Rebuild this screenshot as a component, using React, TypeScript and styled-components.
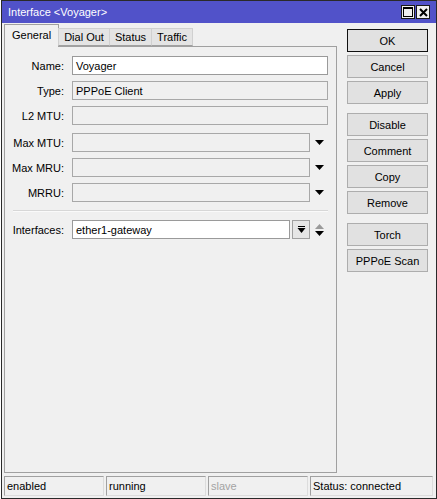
import React from 'react';
import styled, { createGlobalStyle } from 'styled-components';

const GlobalStyle = createGlobalStyle`
  html, body {
    margin: 0;
    padding: 0;
    background: #ffffff;
  }
  body {
    font-family: 'Liberation Sans', Arial, sans-serif;
    font-size: 11px;
    color: #000;
  }
  * {
    box-sizing: border-box;
  }
`;

const Window = styled.div`
  width: 436px;
  height: 499px;
  margin-left: 1px;
  border: 1px solid #2a2a2a;
  background: #f0f0f0;
  display: flex;
  flex-direction: column;
`;

const TitleBar = styled.div`
  height: 22px;
  background: #5152c9;
  color: #ffffff;
  font-size: 11px;
  display: flex;
  align-items: center;
  padding: 0 6px 0 6px;
`;

const Title = styled.span`
  flex: 1;
`;

const TitleButton = styled.div`
  width: 14px;
  height: 14px;
  border: 1px solid #1a1a1a;
  background: #f0f0f0;
  display: flex;
  align-items: center;
  justify-content: center;
  margin-left: 1px;
`;

const Body = styled.div`
  flex: 1;
  display: flex;
  padding: 1px 6px 0 2px;
  min-height: 0;
`;

const LeftColumn = styled.div`
  width: 333px;
  display: flex;
  flex-direction: column;
`;

const TabStrip = styled.div`
  display: flex;
  align-items: flex-end;
  height: 22px;
  position: relative;
  z-index: 1;
`;

const Tab = styled.div<{ $active?: boolean }>`
  height: ${({ $active }) => ($active ? '23px' : '18px')};
  padding: ${({ $active }) => ($active ? '0 7px 3px' : '0 5px')};
  display: flex;
  align-items: center;
  background: ${({ $active }) => ($active ? '#f0f0f0' : '#e4e4e4')};
  border: 1px solid ${({ $active }) => ($active ? '#a0a0a0' : '#d0d0d0')};
  border-bottom: ${({ $active }) => ($active ? 'none' : '1px solid #a0a0a0')};
  margin-bottom: ${({ $active }) => ($active ? '-1px' : '0')};
  margin-left: ${({ $active }) => ($active ? '0' : '-1px')};
  &:first-child {
    margin-left: 0;
  }
`;

const Panel = styled.div`
  flex: 1;
  border: 1px solid #a0a0a0;
  padding: 9px 8px 0 0;
`;

const Row = styled.div<{ $gap?: number }>`
  display: flex;
  align-items: center;
  height: 19px;
  margin-top: ${({ $gap }) => $gap ?? 6}px;
  &:first-child {
    margin-top: 0;
  }
`;

const Label = styled.label`
  width: 59px;
  margin-right: 8px;
  text-align: right;
  white-space: nowrap;
`;

const Field = styled.div<{ $editable?: boolean }>`
  flex: 1;
  height: 19px;
  border: 1px solid ${({ $editable }) => ($editable ? '#9a9a9a' : '#a8a8a8')};
  background: ${({ $editable }) => ($editable ? '#ffffff' : '#f0f0f0')};
  padding: 0 3px;
  display: flex;
  align-items: center;
  white-space: nowrap;
  overflow: hidden;
`;

const ArrowSlot = styled.div`
  width: 18px;
  height: 19px;
  display: flex;
  flex-direction: column;
  align-items: center;
  justify-content: center;
  gap: 2px;
`;

const DropButton = styled.div`
  width: 18px;
  height: 19px;
  margin-left: 2px;
  border: 1px solid #a0a0a0;
  background: #e6e6e6;
  display: flex;
  align-items: center;
  justify-content: center;
`;

const Separator = styled.div`
  margin: 8px 0 8px 8px;
  border-top: 1px solid #d7d7d7;
  border-bottom: 1px solid #fafafa;
`;

const ButtonColumn = styled.div`
  width: 81px;
  margin-left: 10px;
  padding-top: 5px;
  display: flex;
  flex-direction: column;
  gap: 9px;
`;

const ButtonGroup = styled.div`
  display: flex;
  flex-direction: column;
  gap: 3px;
`;

const Button = styled.button<{ $default?: boolean }>`
  height: 23px;
  width: 100%;
  padding: 0;
  border: 1px solid ${({ $default }) => ($default ? '#111111' : '#adadad')};
  background: #e1e1e1;
  font-family: 'Liberation Sans', Arial, sans-serif;
  font-size: 11px;
  color: #000;
`;

const StatusBar = styled.div`
  display: flex;
  gap: 2px;
  height: 22px;
  margin-top: 3px;
  padding: 0 3px 2px 2px;
`;

const StatusCell = styled.div<{ $muted?: boolean; $grow?: boolean }>`
  width: ${({ $grow }) => ($grow ? 'auto' : '100px')};
  flex: ${({ $grow }) => ($grow ? 1 : 'none')};
  height: 20px;
  border: 1px solid;
  border-color: #a0a0a0 #dcdcdc #dcdcdc #a0a0a0;
  padding: 0 2px;
  display: flex;
  align-items: center;
  color: ${({ $muted }) => ($muted ? '#a3a3a3' : '#000')};
`;

const DownTriangle = ({ color = '#000' }: { color?: string }) => (
  <svg width="9" height="5" viewBox="0 0 9 5">
    <polygon points="0,0 9,0 4.5,5" fill={color} />
  </svg>
);

const UpTriangle = ({ color = '#000' }: { color?: string }) => (
  <svg width="9" height="5" viewBox="0 0 9 5">
    <polygon points="0,5 9,5 4.5,0" fill={color} />
  </svg>
);

const DropIcon = () => (
  <svg width="9" height="8" viewBox="0 0 9 8">
    <rect x="1" y="0" width="7" height="1" fill="#000" />
    <polygon points="0.5,2 8.5,2 4.5,7" fill="#000" />
  </svg>
);

const MaximizeIcon = () => (
  <svg width="10" height="10" viewBox="0 0 10 10">
    <rect x="0.5" y="0.5" width="9" height="9" fill="none" stroke="#000" />
    <rect x="0" y="0" width="10" height="2" fill="#000" />
  </svg>
);

const CloseIcon = () => (
  <svg width="9" height="9" viewBox="0 0 9 9">
    <path d="M1 1 L8 8 M8 1 L1 8" stroke="#000" strokeWidth="2" />
  </svg>
);

const fields = [
  { label: 'Name:', value: 'Voyager', editable: true },
  { label: 'Type:', value: 'PPPoE Client' },
  { label: 'L2 MTU:', value: '' },
];

const dropFields = ['Max MTU:', 'Max MRU:', 'MRRU:'];

const buttonGroups = [
  ['OK', 'Cancel', 'Apply'],
  ['Disable', 'Comment', 'Copy', 'Remove'],
  ['Torch', 'PPPoE Scan'],
];

const App = () => {
  return (
    <>
      <GlobalStyle />
      <Window>
        <TitleBar>
          <Title>Interface &lt;Voyager&gt;</Title>
          <TitleButton>
            <MaximizeIcon />
          </TitleButton>
          <TitleButton>
            <CloseIcon />
          </TitleButton>
        </TitleBar>
        <Body>
          <LeftColumn>
            <TabStrip>
              <Tab $active>General</Tab>
              <Tab>Dial Out</Tab>
              <Tab>Status</Tab>
              <Tab>Traffic</Tab>
            </TabStrip>
            <Panel>
              {fields.map((f) => (
                <Row key={f.label}>
                  <Label>{f.label}</Label>
                  <Field $editable={f.editable}>{f.value}</Field>
                </Row>
              ))}
              {dropFields.map((label, i) => (
                <Row key={label} $gap={i === 0 ? 8 : 6}>
                  <Label>{label}</Label>
                  <Field />
                  <ArrowSlot>
                    <DownTriangle />
                  </ArrowSlot>
                </Row>
              ))}
              <Separator />
              <Row $gap={0}>
                <Label>Interfaces:</Label>
                <Field $editable>ether1-gateway</Field>
                <DropButton>
                  <DropIcon />
                </DropButton>
                <ArrowSlot>
                  <UpTriangle color="#9a9a9a" />
                  <DownTriangle />
                </ArrowSlot>
              </Row>
            </Panel>
          </LeftColumn>
          <ButtonColumn>
            {buttonGroups.map((group, gi) => (
              <ButtonGroup key={gi}>
                {group.map((b) => (
                  <Button key={b} $default={b === 'OK'}>
                    {b}
                  </Button>
                ))}
              </ButtonGroup>
            ))}
          </ButtonColumn>
        </Body>
        <StatusBar>
          <StatusCell>enabled</StatusCell>
          <StatusCell>running</StatusCell>
          <StatusCell $muted>slave</StatusCell>
          <StatusCell $grow>Status: connected</StatusCell>
        </StatusBar>
      </Window>
    </>
  );
};

export default App;
